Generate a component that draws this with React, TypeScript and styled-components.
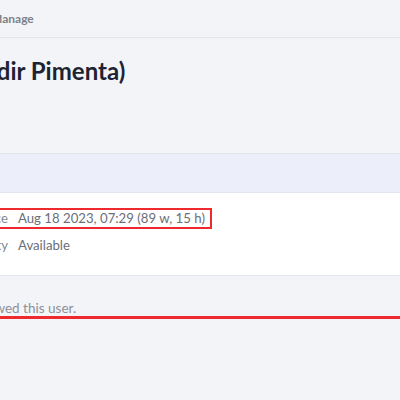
import React from "react";
import styled, { createGlobalStyle } from "styled-components";

const GlobalStyle = createGlobalStyle`
  html, body {
    margin: 0;
    padding: 0;
    background: #f3f4f7;
    font-family: Lato, "Open Sans", "Liberation Sans", sans-serif;
    overflow: hidden;
  }
`;

const Viewport = styled.div`
  width: 400px;
  height: 400px;
  overflow: hidden;
`;

const TopBar = styled.div`
  height: 37px;
  border-bottom: 1px solid #e3e5ea;
  display: flex;
  align-items: center;
`;

const Crumb = styled.span<{ $hide: number }>`
  margin-left: ${(p) => -p.$hide}px;
  font-size: 12px;
  font-weight: 700;
  color: #7d818a;
  white-space: nowrap;
`;

const TitleSection = styled.div`
  padding: 19px 0 68px;
`;

const Title = styled.h1<{ $hide: number }>`
  margin: 0 0 0 ${(p) => -p.$hide}px;
  font-size: 24px;
  line-height: 28px;
  font-weight: 700;
  color: #1d2333;
  white-space: nowrap;
`;

const Panel = styled.section`
  border-top: 1px solid #dfe3ec;
  border-bottom: 1px solid #e3e6ec;
`;

const PanelHeader = styled.div`
  height: 38px;
  background: #eceffa;
  border-bottom: 1px solid #e1e5ef;
`;

const PanelBody = styled.div`
  background: #ffffff;
  padding: 15px 0 19px;
  display: flex;
  flex-direction: column;
  gap: 6px;
`;

const Row = styled.div<{ $marked?: boolean }>`
  display: flex;
  align-items: center;
  gap: 10px;
  width: fit-content;
  margin-left: -114px;
  padding-right: 5px;
  border: 2px solid ${(p) => (p.$marked ? "#ee2a2f" : "transparent")};
  font-size: 13.2px;
  line-height: 17px;
  white-space: nowrap;
`;

const Label = styled.span`
  width: 120px;
  text-align: right;
  color: #858a93;
`;

const Value = styled.span`
  color: #6a6f79;
`;

const Note = styled.p<{ $hide: number }>`
  margin: 24px 0 0 ${(p) => -p.$hide}px;
  font-size: 13.5px;
  line-height: 16px;
  color: #8c9099;
  white-space: nowrap;
  border-bottom: 3px solid #ee2a2f;
`;

export default function App() {
  return (
    <Viewport>
      <GlobalStyle />
      <TopBar>
        <Crumb $hide={9}>Manage</Crumb>
      </TopBar>
      <TitleSection>
        <Title $hide={43}>(Valdir Pimenta)</Title>
      </TitleSection>
      <Panel>
        <PanelHeader />
        <PanelBody>
          <Row $marked>
            <Label>Last appearance</Label>
            <Value>Aug 18 2023, 07:29 (89 w, 15 h)</Value>
          </Row>
          <Row>
            <Label>Availability</Label>
            <Value>Available</Value>
          </Row>
        </PanelBody>
      </Panel>
      <Note $hide={93}>No one has viewed this user.</Note>
    </Viewport>
  );
}
